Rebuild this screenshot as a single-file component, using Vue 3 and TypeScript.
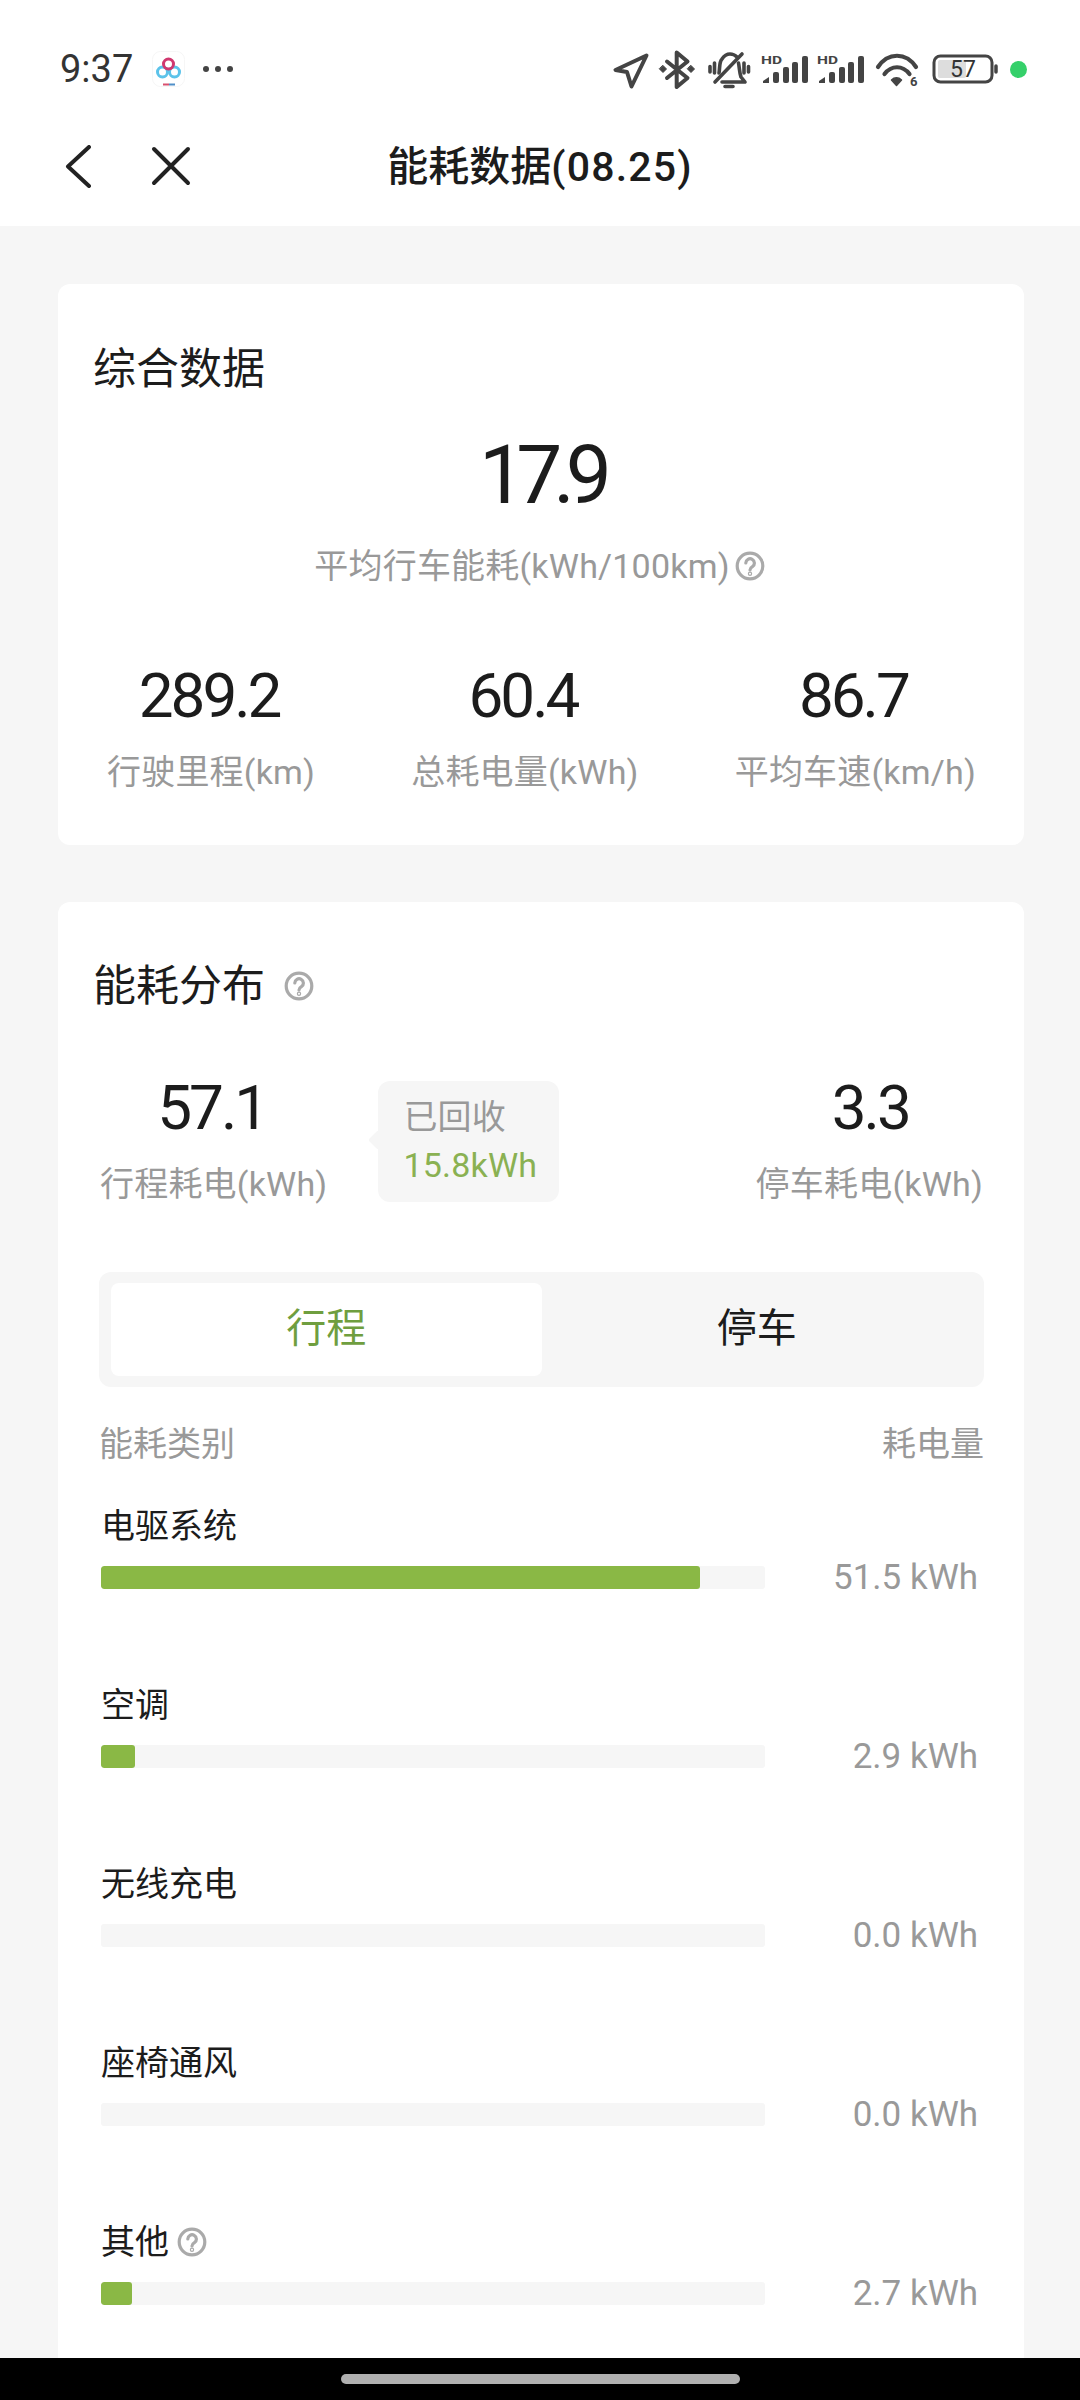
<template>
  <div class="page">
    <header class="top">
      <div class="status">
        <span class="time">9:37</span>
        <svg class="app-logo" width="33" height="36" viewBox="0 0 33 36" fill="none">
          <rect x="0.5" y="0.5" width="32" height="35" rx="8" fill="#fff" stroke="#f6f6f6" />
          <circle cx="10.5" cy="21" r="5" stroke="#5cc3ea" stroke-width="3" />
          <circle cx="22.5" cy="21" r="5" stroke="#5cc3ea" stroke-width="3" />
          <circle cx="16.5" cy="13" r="5" stroke="#d0386f" stroke-width="3" />
          <path d="M11 33.5h6" stroke="#d9506f" stroke-width="2" />
          <path d="M17 33.5h6" stroke="#4f8fc8" stroke-width="2" />
        </svg>
        <span class="more"><i /><i /><i /></span>
        <svg class="sys-icons" width="470" height="80" viewBox="0 0 470 80" fill="none" stroke="#444" stroke-width="3.6" stroke-linecap="round" stroke-linejoin="round">
          <path d="M66.500 25.500 35.500 40l11.500 2 4.500 14.500Z" stroke-width="4" />
          <path d="M87 31.500 107.500 48 96.700 57V22.500l10.800 9L87 48" stroke-width="4" />
          <path d="M83 35.500l3.500 3.500-3.500 3.500-3.500-3.500ZM111 35.500l3.500 3.500-3.500 3.500-3.500-3.500Z" fill="#444" stroke-width="1" />
          <path d="M139 43c1-5 0-11 3-14 2-3 5-5 8-5 3 0 5 1 7 3M158.500 33c1 5 1 10 2.500 14l4 5h-23" />
          <path d="M135 52 162 24" />
          <path d="M130 36.500v5.500M134.500 33v10M164 33v10M168.500 36.500v5.500M145 56.500h8" />
          <text class="hd" x="181" y="34" textLength="21" lengthAdjust="spacingAndGlyphs">HD</text>
          <g fill="#444" stroke="none">
            <path d="M183 53v-2l6-4v6Z" />
            <rect x="193" y="42" width="6" height="11" rx="2" />
            <rect x="203" y="37" width="6" height="16" rx="2" />
            <rect x="212" y="32" width="6" height="21" rx="2" />
            <rect x="222" y="26" width="6" height="27" rx="2" />
          </g>
          <text class="hd" x="237" y="34" textLength="21" lengthAdjust="spacingAndGlyphs">HD</text>
          <g fill="#444" stroke="none">
            <path d="M239 53v-2l6-4v6Z" />
            <rect x="249" y="42" width="6" height="11" rx="2" />
            <rect x="259" y="37" width="6" height="16" rx="2" />
            <rect x="268" y="32" width="6" height="21" rx="2" />
            <rect x="278" y="26" width="6" height="27" rx="2" />
          </g>
          <path d="M298 37c10-15 28-15 38 0M304.500 44c7-9 18-9 25 0" stroke-width="4.200" />
          <path d="M311.500 50c3-3 7-3 10 0l-5 5.500Z" fill="#444" stroke-width="1.500" />
          <text class="six" x="330" y="56">6</text>
          <rect x="354" y="26" width="58" height="26" rx="6.500" stroke-width="3" />
          <rect x="358" y="30" width="28" height="18" rx="2" fill="#ddd" stroke="none" />
          <text class="pct" x="383" y="47">57</text>
          <path d="M416 36v6" stroke-width="3.500" />
          <circle cx="438.500" cy="39.500" r="8.500" fill="#35d06a" stroke="none" />
        </svg>
      </div>
      <nav class="nav">
        <div class="nav-actions">
          <svg width="26" height="43" viewBox="0 0 26 43" fill="none" stroke="#222" stroke-width="4" stroke-linecap="round" stroke-linejoin="round">
            <path d="M24 2 3 21.500 24 41" />
          </svg>
          <svg class="close" width="40" height="40" viewBox="0 0 40 40" fill="none" stroke="#222" stroke-width="4" stroke-linecap="round">
            <path d="M3 3l34 34M37 3 3 37" />
          </svg>
        </div>
        <h1 class="title">能耗数据<span class="title-date">(08.25)</span></h1>
      </nav>
    </header>

    <main class="content">
      <section class="card overview">
        <h2 class="card-title">综合数据</h2>
        <div class="main-value">17.9</div>
        <div class="label main-label">
          平均行车能耗(kWh/100km)
          <svg class="help" viewBox="0 0 30 30" fill="none" stroke="#aaa" stroke-width="3.200" stroke-linecap="round">
            <circle cx="15" cy="15" r="12.800" />
            <path d="M10.800 12a4.300 4.300 0 1 1 6.600 3.700c-1.700 1-2.400 1.800-2.400 3.300" />
            <circle cx="15" cy="22.800" r="0.600" />
          </svg>
        </div>
        <div class="stats">
          <div v-for="s in stats" :key="s.label" class="stat">
            <div class="value">{{ s.value }}</div>
            <div class="label stat-label">{{ s.label }}</div>
          </div>
        </div>
      </section>

      <section class="card dist">
        <h2 class="card-title">
          能耗分布
          <svg class="help title-help" viewBox="0 0 30 30" fill="none" stroke="#aaa" stroke-width="3.200" stroke-linecap="round">
            <circle cx="15" cy="15" r="12.800" />
            <path d="M10.800 12a4.300 4.300 0 1 1 6.600 3.700c-1.700 1-2.400 1.800-2.400 3.300" />
            <circle cx="15" cy="22.800" r="0.600" />
          </svg>
        </h2>

        <div class="summary">
          <div class="stat">
            <div class="value">57.1</div>
            <div class="label stat-label">行程耗电(kWh)</div>
          </div>
          <div class="bubble">
            <div class="bubble-label">已回收</div>
            <div class="bubble-value">15.8kWh</div>
          </div>
          <div class="stat parked">
            <div class="value">3.3</div>
            <div class="label stat-label">停车耗电(kWh)</div>
          </div>
        </div>

        <div class="tabs">
          <div class="tab active">行程</div>
          <div class="tab">停车</div>
        </div>

        <div class="table-head">
          <span>能耗类别</span>
          <span>耗电量</span>
        </div>

        <div v-for="row in rows" :key="row.name" class="row">
          <div class="row-name">
            {{ row.name }}
            <svg v-if="row.help" class="help" viewBox="0 0 30 30" fill="none" stroke="#aaa" stroke-width="3.200" stroke-linecap="round">
              <circle cx="15" cy="15" r="12.800" />
              <path d="M10.800 12a4.300 4.300 0 1 1 6.600 3.700c-1.700 1-2.400 1.800-2.400 3.300" />
              <circle cx="15" cy="22.800" r="0.600" />
            </svg>
          </div>
          <div class="track">
            <div class="fill" :style="{ width: (row.kwh / tripTotal) * 100 + '%' }" />
          </div>
          <div class="row-value">{{ row.kwh.toFixed(1) }} kWh</div>
        </div>
      </section>
    </main>

    <footer class="navbar"><span class="pill" /></footer>
  </div>
</template>

<script setup lang="ts">
const tripTotal = 57.1;

const stats = [
  { value: "289.2", label: "行驶里程(km)" },
  { value: "60.4", label: "总耗电量(kWh)" },
  { value: "86.7", label: "平均车速(km/h)" },
];

const rows: { name: string; kwh: number; help?: boolean }[] = [
  { name: "电驱系统", kwh: 51.5 },
  { name: "空调", kwh: 2.9 },
  { name: "无线充电", kwh: 0 },
  { name: "座椅通风", kwh: 0 },
  { name: "其他", kwh: 2.7, help: true },
];
</script>

<style>
html,
body {
  margin: 0;
  background: #f6f6f6;
}
</style>

<style scoped>
.page {
  width: 1080px;
  height: 2400px;
  display: flex;
  flex-direction: column;
  overflow: hidden;
  background: #f6f6f6;
  color: #1c1c1c;
  font-family: Roboto, "Noto Sans CJK SC", sans-serif;
}

.top {
  flex: none;
  height: 226px;
  background: #fff;
}
.status {
  display: flex;
  align-items: center;
  box-sizing: content-box;
  height: 62px;
  padding: 38px 30px 0 60px;
}
.time {
  font-size: 38px;
  line-height: 62px;
  color: #333;
}
.app-logo {
  margin-left: 19px;
  flex: none;
}
.more {
  display: flex;
  gap: 6px;
  margin-left: 18px;
}
.more i {
  width: 6px;
  height: 6px;
  border-radius: 50%;
  background: #444;
}
.sys-icons {
  flex: none;
  margin-left: auto;
  margin-top: 2px;
}
.hd {
  font: 700 11.5px Roboto, sans-serif;
  fill: #444;
  stroke: none;
}
.six {
  font: 700 13px Roboto, sans-serif;
  fill: #444;
  stroke: none;
}
.pct {
  font: 400 23px Roboto, sans-serif;
  fill: #333;
  stroke: none;
  text-anchor: middle;
}

.nav {
  position: relative;
  display: flex;
  align-items: center;
  height: 120px;
  padding-top: 6px;
}
.nav-actions {
  display: flex;
  align-items: center;
  margin-left: 65px;
}
.close {
  margin-left: 60px;
}
.title {
  position: absolute;
  left: 0;
  right: 0;
  margin: 2px 0 0;
  text-align: center;
  font-size: 41px;
  line-height: 56px;
  font-weight: 500;
  color: #1c1c1c;
}
.title-date {
  letter-spacing: 1.2px;
}

.content {
  flex: 1;
  min-height: 0;
  overflow: hidden;
  padding: 58px 56px 0 58px;
}
.card {
  background: #fff;
  border-radius: 12px;
}
.overview {
  padding: 57px 0 51px;
  text-align: center;
}
.dist {
  margin-top: 57px;
  padding: 56px 40px 0 41px;
  min-height: 1600px;
}
.card-title {
  display: flex;
  align-items: center;
  margin: 0;
  font-size: 43px;
  line-height: 56px;
  font-weight: 400;
  color: #1c1c1c;
  text-align: left;
}
.overview .card-title {
  padding-left: 35px;
}
.dist .card-title {
  margin-left: -6px;
}

.main-value {
  margin-top: 33px;
  font-size: 82px;
  line-height: 90px;
  letter-spacing: -9px;
}
.label {
  font-size: 34px;
  line-height: 44px;
  letter-spacing: 0.2px;
  color: #999;
}
.main-label {
  display: flex;
  justify-content: center;
  align-items: center;
  margin-top: 24px;
  padding-right: 3px;
  gap: 5px;
}
.help {
  flex: none;
  width: 30px;
  height: 30px;
}
.title-help {
  margin-left: 19px;
}

.stats {
  display: flex;
  justify-content: space-between;
  margin-top: 73px;
  padding: 0 48px 0 49px;
}
.stat {
  text-align: center;
}
.value {
  margin-left: -4px;
  font-size: 62px;
  line-height: 70px;
  letter-spacing: -3px;
}
.stat-label {
  margin-top: 19px;
}

.summary {
  display: flex;
  margin-top: 59px;
  padding: 0 1px 0 1px;
}
.parked {
  margin-left: auto;
}
.parked .value {
  margin-left: 2px;
}
.bubble {
  position: relative;
  box-sizing: border-box;
  width: 181px;
  height: 121px;
  margin: 8px 0 0 51px;
  padding: 14px 0 0 25px;
  border-radius: 12px;
  background: #f6f6f6;
  font-size: 34px;
  line-height: 44px;
  letter-spacing: 0.2px;
}
.bubble::before {
  content: "";
  position: absolute;
  left: -7px;
  top: 52px;
  width: 14px;
  height: 14px;
  border-radius: 2px;
  background: #f6f6f6;
  transform: rotate(45deg);
}
.bubble-label {
  color: #999;
}
.bubble-value {
  margin-top: 4px;
  color: #8ab152;
}

.tabs {
  display: flex;
  height: 115px;
  box-sizing: border-box;
  margin-top: 66px;
  padding: 11px 12px;
  border-radius: 12px;
  background: #f6f6f6;
}
.tab {
  flex: 1;
  display: flex;
  align-items: center;
  justify-content: center;
  padding-bottom: 10px;
  border-radius: 8px;
  font-size: 40px;
  color: #1c1c1c;
}
.tab.active {
  background: #fff;
  color: #6f9e3f;
}

.table-head {
  display: flex;
  justify-content: space-between;
  margin-top: 35px;
  font-size: 34px;
  line-height: 44px;
  color: #999;
}

.row {
  display: grid;
  grid-template-columns: 664px 1fr;
  row-gap: 18px;
  padding-left: 2px;
  margin-top: 38px;
  margin-bottom: 94px;
}
.row + .row {
  margin-top: 0;
}
.row-name {
  grid-column: 1 / -1;
  display: flex;
  align-items: center;
  gap: 8px;
  font-size: 34px;
  line-height: 44px;
  color: #1c1c1c;
}
.track {
  height: 23px;
  border-radius: 3px;
  background: #f6f6f6;
  overflow: hidden;
}
.fill {
  height: 100%;
  border-radius: 3px;
  background: #8ab845;
}
.row-value {
  padding-right: 6px;
  text-align: right;
  font-size: 35px;
  line-height: 23px;
  color: #999;
  white-space: nowrap;
}

.navbar {
  flex: none;
  height: 42px;
  display: flex;
  justify-content: center;
  align-items: center;
  background: #000;
}
.pill {
  width: 399px;
  height: 10px;
  border-radius: 5px;
  background: #b0b0b0;
}
</style>
